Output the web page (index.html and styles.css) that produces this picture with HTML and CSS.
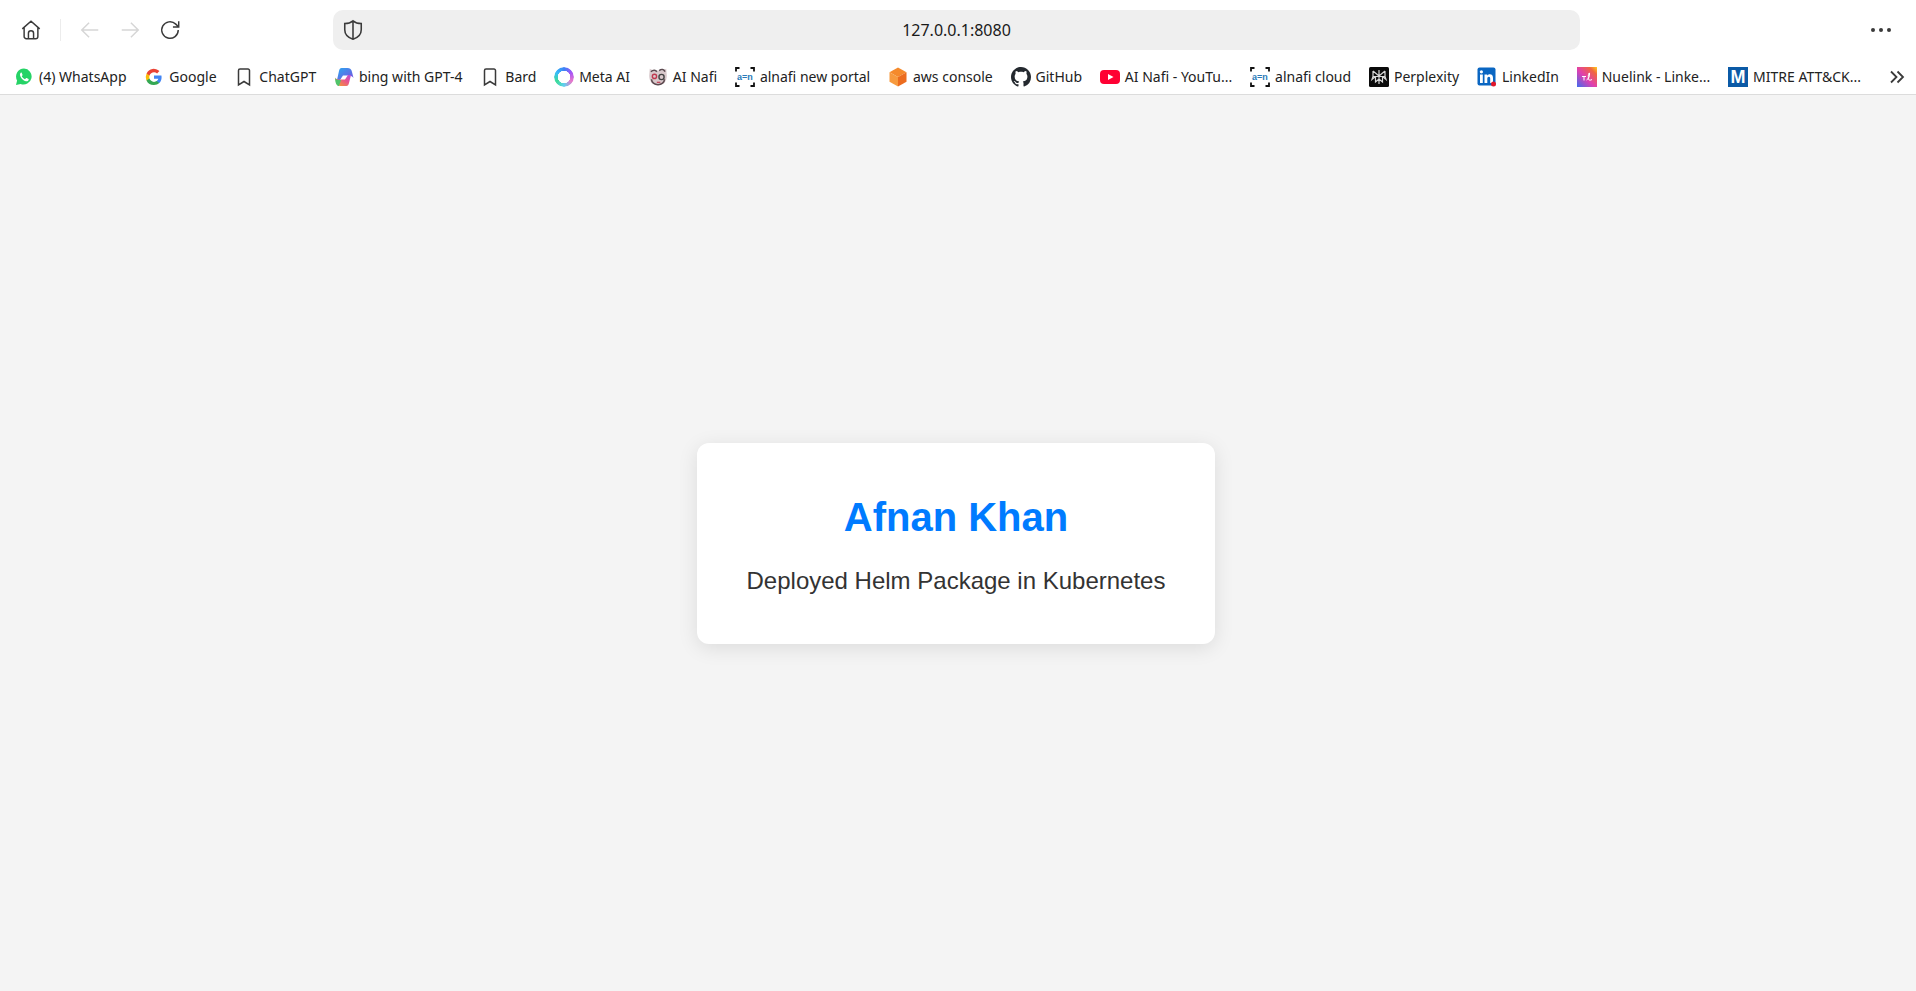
FILE: index.html
```html
<!DOCTYPE html>
<html>
    <head>
        <title>Afnan Khan</title>
        <link rel="stylesheet" href="styles.css">
    </head>
    <body>
        <div class="browser">
            <div class="toolbar">
                <div class="navButtons">
                    <svg class="navIcon home" viewBox="0 0 24 24"><path d="M2.500 10.800 12 2.500l9.500 8.300M4.500 9.200v9.800a2.500 2.500 0 0 0 2.500 2.500h10a2.500 2.500 0 0 0 2.500-2.500V9.200M9.200 21.500v-6a2.800 2.800 0 0 1 5.600 0v6"/></svg>
                    <span class="divider"></span>
                    <svg class="navIcon faded back" viewBox="0 0 24 24"><path d="M21 12H3.500M11 4l-8 8 8 8"/></svg>
                    <svg class="navIcon faded forward" viewBox="0 0 24 24"><path d="M3 12h17.500M13 4l8 8-8 8"/></svg>
                    <svg class="navIcon reload" viewBox="0 0 24 24"><path d="M21 12a9 9 0 1 1-2.700-6.400L21.500 8.800M21.500 2.500v6.300H15.200"/></svg>
                </div>
                <div class="addressBar">
                    <svg class="shield" viewBox="0 0 24 24"><path d="M12 2c2.400 2 5.600 3 9 3v6.600c0 5-3.600 8.600-9 10.400-5.400-1.800-9-5.400-9-10.400V5c3.400 0 6.600-1 9-3zM12 2v20"/></svg>
                    <span class="addressText">127.0.0.1:8080</span>
                </div>
                <div class="menuDots"><span></span><span></span><span></span></div>
            </div>
            <div class="bookmarks">
                <div class="bookmark">
                    <svg class="favicon" viewBox="0 0 20 20"><path fill="#25d366" d="M10 1.500a8 8 0 0 0-6.900 12L2 18l4.600-1.100A8 8 0 1 0 10 1.500z"/><path fill="#fff" d="M7.300 5.500c-.8.300-1.500 1.300-1.300 2.500.4 2.600 3.300 5.700 6 6.300 1.300.3 2.300-.4 2.600-1.300.1-.5.1-.9 0-1l-2-1c-.3-.1-.5 0-.7.2l-.6.8c-.2.2-.4.2-.7.100-1.100-.5-2.100-1.400-2.700-2.500-.1-.3-.1-.4.1-.6l.5-.7c.1-.2.1-.4 0-.6l-.8-1.900c-.1-.2-.3-.3-.4-.3z"/></svg>
                    <span class="label">(4) WhatsApp</span>
                </div>
                <div class="bookmark">
                    <svg class="favicon" viewBox="0 0 20 20"><path fill="#4285f4" d="M17.600 10.200c0-.6-.1-1.100-.2-1.600H10v3.100h4.300a3.600 3.600 0 0 1-1.600 2.400v2h2.600c1.500-1.400 2.300-3.400 2.300-5.900z"/><path fill="#34a853" d="M10 18c2.200 0 4-.7 5.300-1.900l-2.600-2c-.7.5-1.600.8-2.700.8-2.100 0-3.900-1.400-4.500-3.300H2.600v2.100A8 8 0 0 0 10 18z"/><path fill="#fbbc05" d="M5.500 11.600a4.800 4.800 0 0 1 0-3.100V6.400H2.600a8 8 0 0 0 0 7.200z"/><path fill="#ea4335" d="M10 5.200c1.200 0 2.200.4 3.100 1.200l2.300-2.300A8 8 0 0 0 2.600 6.400l2.900 2.100C6.100 6.600 7.900 5.200 10 5.200z"/></svg>
                    <span class="label">Google</span>
                </div>
                <div class="bookmark">
                    <svg class="favicon" viewBox="0 0 20 20"><path class="saved" d="M4.500 3.500A1.500 1.500 0 0 1 6 2h8a1.500 1.500 0 0 1 1.500 1.500V18L10 14.500 4.500 18z"/></svg>
                    <span class="label">ChatGPT</span>
                </div>
                <div class="bookmark">
                    <svg class="favicon" viewBox="0 0 20 20">
                        <defs>
                            <linearGradient id="copilotA" x1="0" y1="0" x2="1" y2="1"><stop offset="0" stop-color="#2aa7f0"/><stop offset="1" stop-color="#7a4fe0"/></linearGradient>
                            <linearGradient id="copilotB" x1="0" y1="1" x2="1" y2="0"><stop offset="0" stop-color="#f5a623"/><stop offset=".6" stop-color="#e9518f"/><stop offset="1" stop-color="#b04fe0"/></linearGradient>
                        </defs>
                        <path fill="url(#copilotA)" d="M7.500 1h6c2.500 0 4 1.500 4.500 4l1.500 6c-1-1.500-2.500-2.500-4.500-2.500H9L6 13H3L5 4c.4-1.800 1.200-3 2.500-3z"/>
                        <path fill="url(#copilotB)" d="M12.500 19h-6C4 19 2.500 17.500 2 15L1 10.500c1 1.500 2.500 2 4 2h6L14 8h3l-2 8c-.4 1.800-1.200 3-2.500 3z"/>
                        <path fill="#4fc46a" d="M1 11c1 1.500 2.500 2 4 2h2l-2 6c-2 0-3-2-3.500-4z"/>
                    </svg>
                    <span class="label">bing with GPT-4</span>
                </div>
                <div class="bookmark">
                    <svg class="favicon" viewBox="0 0 20 20"><path class="saved" d="M4.500 3.500A1.500 1.500 0 0 1 6 2h8a1.500 1.500 0 0 1 1.500 1.500V18L10 14.500 4.500 18z"/></svg>
                    <span class="label">Bard</span>
                </div>
                <div class="bookmark">
                    <span class="favicon metaRing"></span>
                    <span class="label">Meta AI</span>
                </div>
                <div class="bookmark">
                    <svg class="favicon" viewBox="1.500 2.500 17 17"><path fill="#d9c9cc" d="M3 4l3 1.500h8L17 4l.5 6c0 5-3 8-7.500 8s-7.500-3-7.500-8z"/><path fill="none" stroke="#5c4a50" stroke-width="1.300" d="M4 6.500c2-2 4-1.500 5 0M11 5.500c2-1.500 4-1 5 1M4.500 13a5.500 4.500 0 0 0 11 0"/><circle cx="7" cy="10.500" r="1.800" fill="none" stroke="#c0394f" stroke-width="1.200"/><circle cx="13" cy="11" r="2.200" fill="none" stroke="#444" stroke-width="1.200"/><path fill="none" stroke="#c0394f" d="M9 15.500h3"/></svg>
                    <span class="label">AI Nafi</span>
                </div>
                <div class="bookmark">
                    <svg class="favicon" viewBox="0 0 20 20"><path class="corners" d="M1 4.500V1h3.500M15.500 1H19v3.500M1 15.500V19h3.500M15.500 19H19v-3.500"/><text class="logoText" x="10" y="13">a=n</text></svg>
                    <span class="label">alnafi new portal</span>
                </div>
                <div class="bookmark">
                    <svg class="favicon" viewBox="0 0 20 20"><path fill="#f58a2c" d="M10 .5l8.500 4.800L10 10 1.500 5.300z"/><path fill="#f79a3e" d="M1.500 5.300L10 10v9.500l-8.500-4.800z"/><path fill="#ec6c1f" d="M18.500 5.300L10 10v9.500l8.500-4.800z"/></svg>
                    <span class="label">aws console</span>
                </div>
                <div class="bookmark">
                    <svg class="favicon" viewBox="0 0 16 16"><path fill="#24292f" d="M8 0C3.580 0 0 3.580 0 8c0 3.540 2.290 6.530 5.470 7.590.4.070.55-.17.55-.38 0-.19-.01-.82-.01-1.490-2.010.37-2.530-.49-2.690-.94-.09-.23-.48-.94-.82-1.130-.28-.15-.68-.52-.01-.53.63-.01 1.080.58 1.230.82.720 1.210 1.870.87 2.330.66.070-.52.280-.87.510-1.070-1.780-.2-3.640-.89-3.640-3.950 0-.87.310-1.590.820-2.150-.08-.2-.36-1.020.08-2.120 0 0 .67-.21 2.200.82.640-.18 1.320-.27 2-.27s1.360.09 2 .27c1.530-1.040 2.200-.82 2.200-.82.440 1.100.16 1.920.08 2.120.51.560.82 1.270.82 2.150 0 3.070-1.870 3.750-3.650 3.950.29.250.54.730.54 1.480 0 1.070-.01 1.930-.01 2.200 0 .21.150.46.550.38A8.010 8.010 0 0 0 16 8c0-4.420-3.580-8-8-8z"/></svg>
                    <span class="label">GitHub</span>
                </div>
                <div class="bookmark">
                    <svg class="favicon" viewBox="0 0 20 20"><rect x="0" y="3" width="20" height="14" rx="4" fill="#ff0033"/><path fill="#fff" d="M8 7l5.500 3L8 13z"/></svg>
                    <span class="label">AI Nafi - YouTu...</span>
                </div>
                <div class="bookmark">
                    <svg class="favicon" viewBox="0 0 20 20"><path class="corners" d="M1 4.500V1h3.500M15.500 1H19v3.500M1 15.500V19h3.500M15.500 19H19v-3.500"/><text class="logoText" x="10" y="13">a=n</text></svg>
                    <span class="label">alnafi cloud</span>
                </div>
                <div class="bookmark">
                    <svg class="favicon" viewBox="0 0 20 20"><rect width="20" height="20" rx="1.500" fill="#0b0b0b"/><path fill="none" stroke="#d8d8d8" stroke-width="1.200" d="M10 3v14M4 4l6 5 6-5M4 9.500h12M4 4v5.500l-1 3 3.500-3M16 4v5.500l1 3-3.500-3M6.500 9.500V15L10 12l3.500 3V9.500"/></svg>
                    <span class="label">Perplexity</span>
                </div>
                <div class="bookmark">
                    <svg class="favicon" viewBox="0 0 20 20"><rect x="0.500" y="0.500" width="18" height="18" rx="2" fill="#0a66c2"/><rect x="3" y="7.500" width="2.800" height="8.500" fill="#fff"/><circle cx="4.400" cy="4.800" r="1.600" fill="#fff"/><path fill="#fff" d="M7.500 7.500h2.700v1.200c.5-.8 1.400-1.400 2.600-1.400 2.300 0 3.200 1.500 3.200 3.800V16h-2.800v-4.400c0-1.100-.3-1.900-1.300-1.900s-1.600.8-1.600 1.900V16H7.500z"/><circle cx="16.500" cy="17" r="2.500" fill="#e0162b"/></svg>
                    <span class="label">LinkedIn</span>
                </div>
                <div class="bookmark">
                    <svg class="favicon" viewBox="0 0 20 20">
                        <defs><linearGradient id="nuelink" x1="0" y1="1" x2="1" y2="0"><stop offset="0" stop-color="#3f6cf0"/><stop offset=".45" stop-color="#e03fb0"/><stop offset=".8" stop-color="#f0653f"/><stop offset="1" stop-color="#ffd21f"/></linearGradient></defs>
                        <rect width="20" height="20" fill="url(#nuelink)"/>
                        <path fill="none" stroke="#fff" stroke-width="1" d="M5 9.500h4M7 9.500v4M9.500 13c2-1 3.500-4 3-7-1-.5-1.500 3-1 6 .2 1.500 2 1.500 3.500.5"/>
                    </svg>
                    <span class="label">Nuelink - Linke...</span>
                </div>
                <div class="bookmark">
                    <svg class="favicon" viewBox="0 0 20 20"><rect width="20" height="20" fill="#0b5aa6"/><text class="mitreM" x="10" y="16">M</text></svg>
                    <span class="label">MITRE ATT&amp;CK...</span>
                </div>
                <svg class="moreIcon" viewBox="0 0 16 16"><path d="M2 2.500 7.500 8 2 13.500M8.500 2.500 14 8l-5.500 5.500"/></svg>
            </div>
        </div>
        <div class="page">
            <div class="card">
                <h1>Afnan Khan</h1>
                <p>Deployed Helm Package in Kubernetes</p>
            </div>
        </div>
    </body>
</html>
```

FILE: styles.css
```css
*{
    box-sizing: border-box;
}
html, body{
    height: 100%;
}
body{
    margin: 0;
    display: flex;
    flex-direction: column;
    background: #f4f4f4;
    font-family: "Liberation Sans", Arial, sans-serif;
    overflow: hidden;
}

.browser{
    background: #ffffff;
    border-bottom: 1px solid #dcdcdc;
    height: 95px;
    flex-shrink: 0;
}
.toolbar{
    display: flex;
    align-items: center;
    height: 60px;
}
.navButtons{
    display: flex;
    align-items: center;
    width: 333px;
    padding-left: 20px;
}
.navIcon{
    width: 22px;
    height: 22px;
    fill: none;
    stroke: #3a3a3a;
    stroke-width: 1.600;
}
.navIcon.faded{
    stroke: #d6d6d6;
}
.divider{
    width: 1px;
    height: 22px;
    background: #ececec;
    margin-left: 18px;
    margin-right: 18px;
}
.forward{
    margin-left: 18px;
}
.reload{
    margin-left: 18px;
}
.addressBar{
    position: relative;
    display: flex;
    align-items: center;
    justify-content: center;
    width: 1247px;
    height: 40px;
    background: #efefef;
    border-radius: 10px;
}
.shield{
    position: absolute;
    left: 9px;
    top: 9px;
    width: 22px;
    height: 22px;
    fill: none;
    stroke: #3a3a3a;
    stroke-width: 1.700;
}
.addressText{
    font-family: "Noto Sans", sans-serif;
    font-size: 16px;
    color: #1a1a1a;
}
.menuDots{
    display: flex;
    gap: 4px;
    margin-left: 291px;
}
.menuDots span{
    width: 4px;
    height: 4px;
    border-radius: 50%;
    background: #3a3a3a;
}

.bookmarks{
    display: flex;
    align-items: center;
    height: 33px;
    padding-left: 14px;
    gap: 17.8px;
}
.bookmark{
    display: flex;
    align-items: center;
    gap: 5px;
    flex-shrink: 0;
}
.favicon{
    display: block;
    width: 20px;
    height: 20px;
    flex-shrink: 0;
}
.label{
    font-family: "Noto Sans", sans-serif;
    font-size: 14px;
    color: #222222;
    white-space: nowrap;
}
.saved{
    fill: none;
    stroke: #3a3a3a;
    stroke-width: 1.500;
}
.metaRing{
    border-radius: 50%;
    background: conic-gradient(#3b82f6, #a855f7, #e879c9, #60d0f0, #3ddc97, #38bdf8, #3b82f6);
    -webkit-mask: radial-gradient(circle, transparent 6px, #000 6.500px);
    mask: radial-gradient(circle, transparent 6px, #000 6.500px);
}
.corners{
    fill: none;
    stroke: #111111;
    stroke-width: 1.800;
}
.logoText{
    font-family: "Liberation Sans", sans-serif;
    font-size: 9px;
    font-weight: bold;
    fill: #2a7ab8;
    text-anchor: middle;
}
.mitreM{
    font-family: "Liberation Sans", sans-serif;
    font-size: 18px;
    font-weight: bold;
    fill: #ffffff;
    text-anchor: middle;
}
.moreIcon{
    width: 16px;
    height: 16px;
    margin-left: 10px;
    fill: none;
    stroke: #3a3a3a;
    stroke-width: 1.800;
}

.page{
    flex: 1;
    display: flex;
    align-items: center;
    justify-content: center;
    padding-right: 4px;
}
.card{
    width: 518px;
    padding: 52px 40px 49px 40px;
    background: #ffffff;
    border-radius: 12px;
    box-shadow: 0 4px 20px rgba(0, 0, 0, 0.1);
    text-align: center;
}
.card h1{
    margin: 0 0 27px 0;
    font-size: 40px;
    color: #007bff;
}
.card p{
    margin: 0;
    font-size: 24px;
    color: #333333;
}
```
